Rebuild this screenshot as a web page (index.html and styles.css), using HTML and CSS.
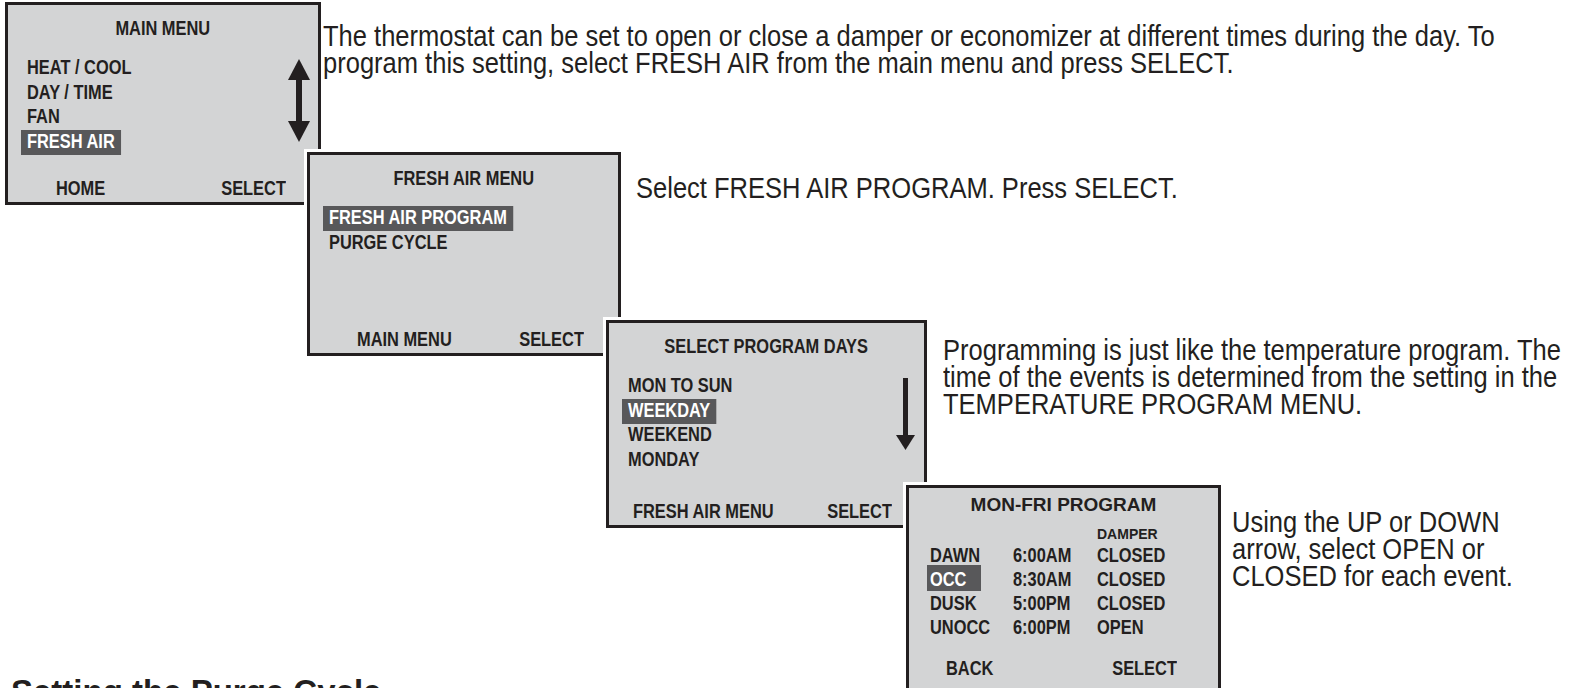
FILE: index.html
```html
<!DOCTYPE html>
<html lang="en">
<head>
<meta charset="UTF-8">
<meta name="viewport" content="width=device-width, initial-scale=1.0">
<title>Fresh Air Program</title>
<link rel="stylesheet" href="styles.css">
</head>
<body>

<div class="page">

    <section class="step step-1">
        <div class="screen screen-1">
            <div class="screen-title"><span>MAIN MENU</span></div>
            <ul class="menu">
                <li><span>HEAT / COOL</span></li>
                <li><span>DAY / TIME</span></li>
                <li><span>FAN</span></li>
                <li><span class="active">FRESH AIR</span></li>
            </ul>
            <svg class="arrow arrow-updown" width="22" height="83" viewBox="0 0 22 83">
                <polygon points="11,0 22,21 0,21" fill="#231f20"/>
                <rect x="8" y="20" width="6" height="43" fill="#231f20"/>
                <polygon points="0,62 22,62 11,83" fill="#231f20"/>
            </svg>
            <div class="screen-footer">
                <span>HOME</span>
                <span>SELECT</span>
            </div>
        </div>
        <p class="note"><span>The thermostat can be set to open or close a damper or economizer at different times during the day. To<br>program this setting, select FRESH AIR from the main menu and press SELECT.</span></p>
    </section>

    <section class="step step-2">
        <div class="screen screen-2">
            <div class="screen-title"><span>FRESH AIR MENU</span></div>
            <ul class="menu">
                <li><span class="active">FRESH AIR PROGRAM</span></li>
                <li><span>PURGE CYCLE</span></li>
            </ul>
            <div class="screen-footer">
                <span>MAIN MENU</span>
                <span>SELECT</span>
            </div>
        </div>
        <p class="note"><span>Select FRESH AIR PROGRAM. Press SELECT.</span></p>
    </section>

    <section class="step step-3">
        <div class="screen screen-3">
            <div class="screen-title"><span>SELECT PROGRAM DAYS</span></div>
            <ul class="menu">
                <li><span>MON TO SUN</span></li>
                <li><span class="active">WEEKDAY</span></li>
                <li><span>WEEKEND</span></li>
                <li><span>MONDAY</span></li>
            </ul>
            <svg class="arrow arrow-down" width="19" height="72" viewBox="0 0 19 72">
                <rect x="7" y="0" width="5" height="58" fill="#231f20"/>
                <polygon points="0,57 19,57 9.5,72" fill="#231f20"/>
            </svg>
            <div class="screen-footer">
                <span>FRESH AIR MENU</span>
                <span>SELECT</span>
            </div>
        </div>
        <p class="note"><span>Programming is just like the temperature program. The<br>time of the events is determined from the setting in the<br>TEMPERATURE PROGRAM MENU.</span></p>
    </section>

    <section class="step step-4">
        <div class="screen screen-4">
            <div class="screen-title"><span>MON-FRI PROGRAM</span></div>
            <div class="col-head">DAMPER</div>
            <div class="events">
                <div class="event"><span class="event-name"><span class="narrow">DAWN</span></span><span class="narrow">6:00AM</span><span class="narrow">CLOSED</span></div>
                <div class="event"><span class="event-name active"><span class="narrow">OCC</span></span><span class="narrow">8:30AM</span><span class="narrow">CLOSED</span></div>
                <div class="event"><span class="event-name"><span class="narrow">DUSK</span></span><span class="narrow">5:00PM</span><span class="narrow">CLOSED</span></div>
                <div class="event"><span class="event-name"><span class="narrow">UNOCC</span></span><span class="narrow">6:00PM</span><span class="narrow">OPEN</span></div>
            </div>
            <div class="screen-footer">
                <span>BACK</span>
                <span>SELECT</span>
            </div>
        </div>
        <p class="note"><span>Using the UP or DOWN<br>arrow, select OPEN or<br>CLOSED for each event.</span></p>
    </section>

    <h2 class="section-title">Setting the Purge Cycle</h2>

</div>

</body>
</html>
```

FILE: styles.css
```css
html, body {
    margin: 0;
    padding: 0;
    background-color: #fff;
    overflow: hidden;
}

body {
    font-family: "Liberation Sans", Arial, sans-serif;
    color: #231f20;
}

.page {
    padding-top: 2px;
}

.step {
    display: flex;
    align-items: flex-start;
}

.step-1 { margin-left: 5px; }
.step-2 { margin-left: 307px; margin-top: -53px; }
.step-3 { margin-left: 606px; margin-top: -36px; }
.step-4 { margin-left: 906px; margin-top: -43px; }

/* thermostat screens - condensed text is plain Arial squeezed sideways */
.screen {
    position: relative;
    box-sizing: border-box;
    display: flex;
    flex-direction: column;
    border: 3px solid #231f20;
    background-color: #d3d4d5;
    box-shadow: 0 0 0 3px #fff;
    font-weight: bold;
    font-size: 20px;
    flex-shrink: 0;
}

.screen-1 { width: 316px; height: 203px; }
.screen-2 { width: 314px; height: 204px; }
.screen-3 { width: 321px; height: 208px; }
.screen-4 { width: 315px; height: 208px; }

.screen-title {
    text-align: center;
    line-height: 24px;
    padding-top: 11px;
    white-space: nowrap;
}

.screen-title span {
    display: inline-block;
    transform: scaleX(0.82);
}

.menu {
    list-style: none;
    margin: 15px 0 0 13px;
    padding: 0;
}

.menu li {
    height: 24.7px;
    line-height: 24.7px;
    white-space: nowrap;
}

.menu span {
    display: inline-block;
    line-height: 22px;
    padding: 0 7.3px 3px;
    transform: scaleX(0.82);
    transform-origin: left center;
}

.active {
    background-color: #58585a;
    color: #fff;
}

.narrow {
    display: inline-block;
    transform: scaleX(0.82);
    transform-origin: left center;
    white-space: nowrap;
}

.arrow {
    position: absolute;
}

.arrow-updown { left: 280px; top: 54px; }
.arrow-down { left: 287px; top: 55px; }

.screen-footer {
    margin-top: auto;
    display: flex;
    justify-content: space-between;
    line-height: 24px;
    padding-bottom: 2px;
    white-space: nowrap;
}

.screen-footer span {
    display: inline-block;
    transform: scaleX(0.82);
    transform-origin: left center;
}

.screen-footer span:last-child {
    transform-origin: right center;
}

.screen-1 .screen-footer { padding-left: 48px; padding-right: 32px; }
.screen-2 .screen-footer { padding-left: 47px; padding-right: 34px; }
.screen-3 .screen-footer { padding-left: 24px; padding-right: 32px; }
.screen-4 .screen-footer { padding-left: 37px; padding-right: 41px; margin-top: 17px; }

/* event table on the last screen */
.screen-4 .screen-title {
    font-size: 19px;
    padding-top: 5px;
}

.screen-4 .screen-title span {
    transform: none;
}

.col-head {
    font-size: 14px;
    line-height: 16px;
    margin-top: 9px;
    padding-left: 188px;
}

.events {
    margin-top: 1px;
    padding-left: 18px;
}

.event {
    display: grid;
    grid-template-columns: 86px 84px 1fr;
    height: 24px;
    line-height: 24px;
}

.event-name {
    display: inline-block;
    justify-self: start;
    box-sizing: border-box;
    width: 54px;
    padding: 2px 0 0 3px;
    margin-top: -2px;
}

/* explanation text */
.note {
    margin: 0;
    font-size: 29px;
    line-height: 27px;
    white-space: nowrap;
}

.note span {
    display: inline-block;
    transform: scaleX(0.88);
    transform-origin: left top;
}

.step-1 .note { margin: 21px 0 0 2px; }
.step-2 .note { margin: 23px 0 0 15px; }
.step-3 .note { margin: 17px 0 0 16px; }
.step-4 .note { margin: 24px 0 0 11px; }

.section-title {
    margin: -17px 0 0 11px;
    font-size: 33px;
    line-height: 32px;
    font-weight: bold;
}
```
